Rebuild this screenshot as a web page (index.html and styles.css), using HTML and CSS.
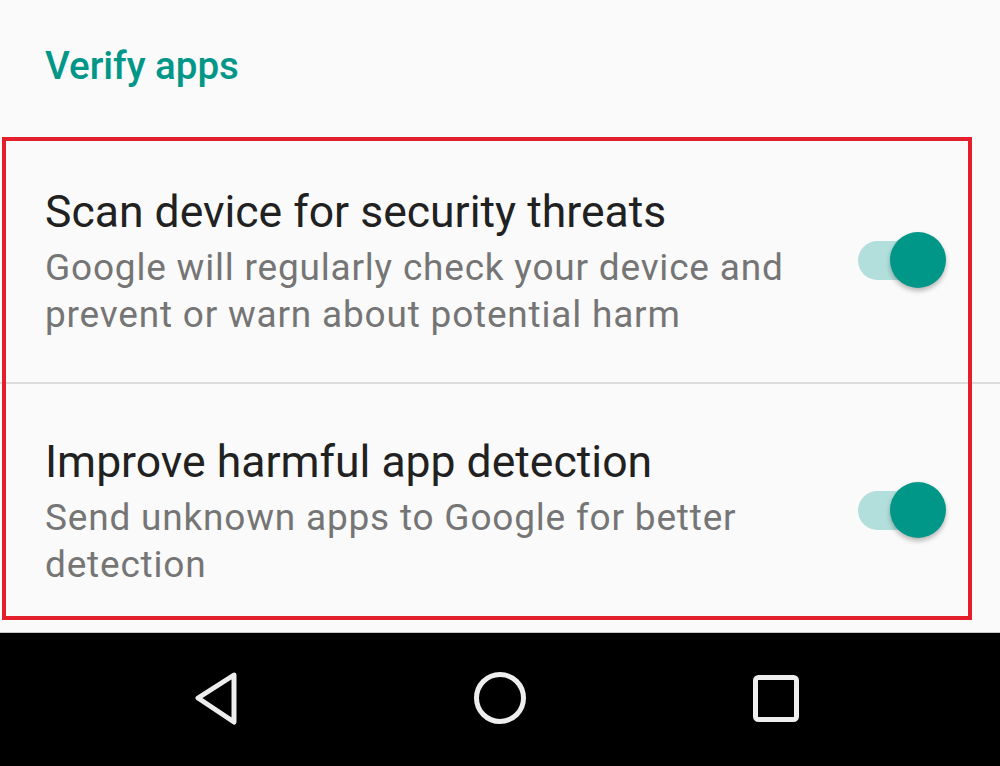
FILE: index.html
```html
<!DOCTYPE html>
<html lang="en">
<head>
<meta charset="UTF-8">
<meta name="viewport" content="width=device-width, initial-scale=1.0">
<link rel="stylesheet" href="styles.css">
</head>
<body>
    <div class="screen">
        <!-- Category title -->
        <div class="category">
            <h2 class="category-title">Verify apps</h2>
        </div>

        <!-- Preference list -->
        <div class="pref-list">
            <div class="pref-item">
                <div class="pref-text">
                    <div class="pref-title">Scan device for security threats</div>
                    <div class="pref-summary">Google will regularly check your device and prevent or warn about potential harm</div>
                </div>
                <div class="switch on">
                    <div class="switch-track"></div>
                    <div class="switch-thumb"></div>
                </div>
            </div>
            <div class="divider"></div>
            <div class="pref-item second">
                <div class="pref-text">
                    <div class="pref-title">Improve harmful app detection</div>
                    <div class="pref-summary">Send unknown apps to Google for better detection</div>
                </div>
                <div class="switch on">
                    <div class="switch-track"></div>
                    <div class="switch-thumb"></div>
                </div>
            </div>
            <div class="highlight-box"></div>
        </div>

        <!-- Navigation bar -->
        <div class="nav-bar">
            <div class="nav-btn">
                <svg width="60" height="60" viewBox="0 0 60 60">
                    <polygon points="42,6 6,29 42,53" fill="none" stroke="#eeeeee" stroke-width="5" stroke-linejoin="round"/>
                </svg>
            </div>
            <div class="nav-btn">
                <svg width="60" height="60" viewBox="0 0 60 60">
                    <circle cx="30" cy="29" r="23.5" fill="none" stroke="#eeeeee" stroke-width="5"/>
                </svg>
            </div>
            <div class="nav-btn">
                <svg width="60" height="60" viewBox="0 0 60 60">
                    <rect x="7.5" y="8.5" width="41" height="42" rx="3" fill="none" stroke="#eeeeee" stroke-width="5"/>
                </svg>
            </div>
        </div>
    </div>
</body>
</html>
```

FILE: styles.css
```css
body, html {
    margin: 0;
    padding: 0;
    font-family: Roboto, "Noto Sans", Arial, sans-serif;
    background-color: #fafafa;
}

.screen {
    width: 1000px;
    height: 766px;
    display: flex;
    flex-direction: column;
    overflow: hidden;
}

/* Category header */
.category {
    height: 138px;
    box-sizing: border-box;
    padding: 44px 0 0 45px;
}

.category-title {
    margin: 0;
    font-size: 38.5px;
    line-height: 44px;
    font-weight: 500;
    color: #009688;
}

/* Preferences */
.pref-list {
    position: relative;
    flex: 1;
}

.pref-item {
    display: flex;
    align-items: center;
    padding: 46px 0 44px 45px;
}

.pref-item.second {
    padding-top: 50px;
}

.pref-text {
    flex: 1;
    padding-right: 40px;
}

.pref-title {
    font-size: 44.5px;
    line-height: 56px;
    color: #212121;
    margin-bottom: 4px;
}

.pref-summary {
    font-size: 37px;
    line-height: 47px;
    letter-spacing: 0.8px;
    color: #757575;
}

.divider {
    height: 2px;
    background-color: #dcdcdc;
}

/* Switch */
.switch {
    position: relative;
    width: 84px;
    height: 39px;
    margin-right: 58px;
}

.switch-track {
    width: 84px;
    height: 39px;
    border-radius: 20px;
    background-color: #b2dfdb;
}

.switch-thumb {
    position: absolute;
    left: 32px;
    top: -9px;
    width: 56px;
    height: 56px;
    border-radius: 50%;
    background-color: #009688;
    box-shadow: 0 3px 5px rgba(0, 0, 0, 0.28);
}

/* Red annotation box drawn over the list */
.highlight-box {
    position: absolute;
    left: 2px;
    top: -1px;
    width: 970px;
    height: 483px;
    box-sizing: border-box;
    border: 4px solid #e21f2b;
    pointer-events: none;
}

/* Navigation bar */
.nav-bar {
    height: 134px;
    background-color: #000;
    border-top: 1px solid #c8c8c8;
    display: grid;
    grid-template-columns: repeat(3, 278px);
    justify-content: center;
    align-items: center;
}

.nav-btn {
    display: flex;
    justify-content: center;
    align-items: center;
}

.nav-btn svg {
    display: block;
}
```
